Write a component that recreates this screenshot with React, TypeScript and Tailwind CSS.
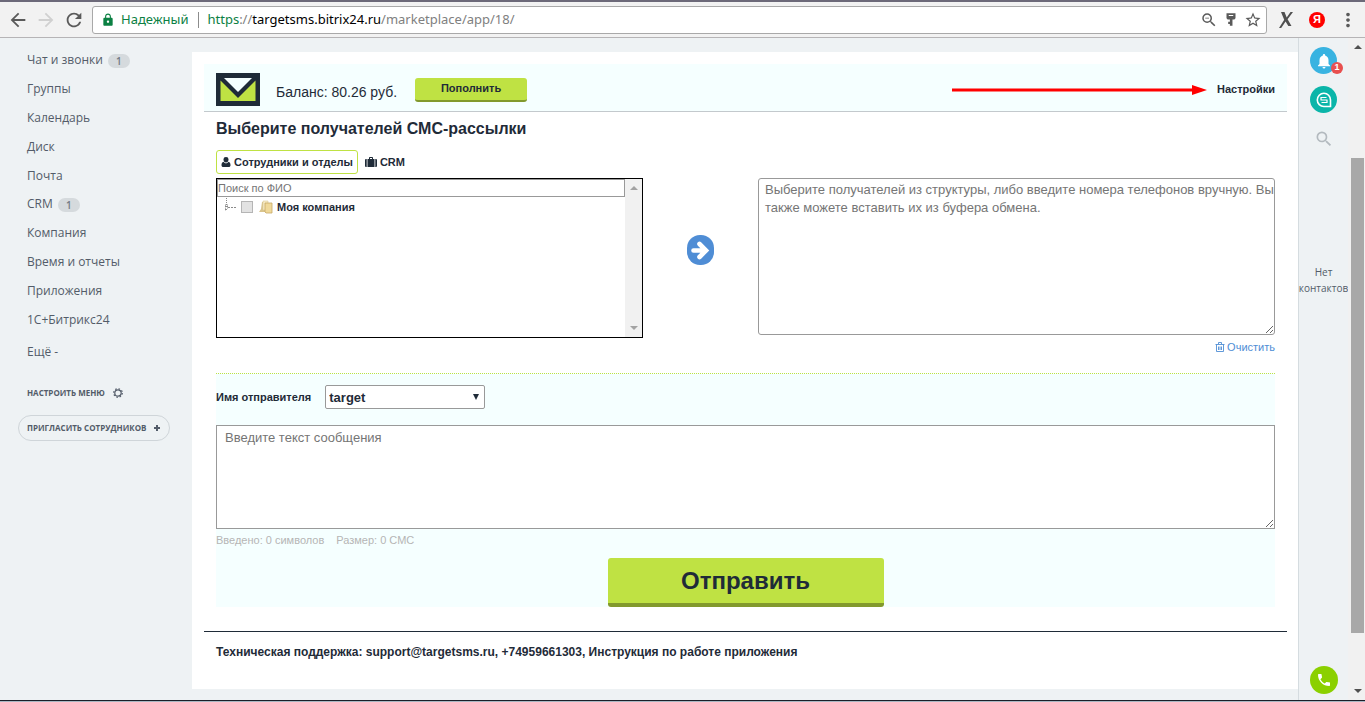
import React from "react";
import {
  MdArrowBack,
  MdArrowForward,
  MdLock,
  MdMoreVert,
  MdNotifications,
  MdPhone,
  MdRefresh,
  MdSearch,
  MdStarBorder,
  MdZoomOut,
} from "react-icons/md";

type MenuItem = { label: string; badge?: number };

const menu: MenuItem[] = [
  { label: "Чат и звонки", badge: 1 },
  { label: "Группы" },
  { label: "Календарь" },
  { label: "Диск" },
  { label: "Почта" },
  { label: "CRM", badge: 1 },
  { label: "Компания" },
  { label: "Время и отчеты" },
  { label: "Приложения" },
  { label: "1С+Битрикс24" },
];

function BrowserBar() {
  return (
    <header className="flex h-[38px] shrink-0 items-center border-t-2 border-b border-t-[#6c6979] border-b-[#b6b4b6] bg-[#f2f2f2] font-['Noto_Sans',sans-serif] text-[#5a5a5a]">
      <nav className="flex w-[92px] items-center gap-1.5 pl-[7px]" aria-label="Навигация">
        <button type="button" aria-label="Назад">
          <MdArrowBack className="size-[22px]" />
        </button>
        <button type="button" aria-label="Вперед" className="text-[#d0d0d0]">
          <MdArrowForward className="size-[22px]" />
        </button>
        <button type="button" aria-label="Обновить">
          <MdRefresh className="size-[22px]" />
        </button>
      </nav>
      <div className="flex h-7 grow items-center rounded-[3px] border border-[#a9a9a9] bg-white pr-1 pl-2 text-[13px]">
        <MdLock className="size-3.5 text-[#0b8043]" />
        <span className="ml-1.5 text-[#0b8043]">Надежный</span>
        <span className="mr-2 ml-2.5 h-4 w-px bg-[#8c8c8c]" />
        <span className="grow text-[#808080]">
          <span className="text-[#0b8043]">https</span>://<span className="text-black">targetsms.bitrix24.ru</span>
          /marketplace/app/18/
        </span>
        <div className="flex items-center gap-1">
          <button type="button" aria-label="Масштаб">
            <MdZoomOut className="size-[18px]" />
          </button>
          <button type="button" aria-label="Пароли">
            <svg viewBox="0 0 16 16" className="size-[18px]" fill="currentColor">
              <path fillRule="evenodd" d="M4 2h8v4.500l-1 1H9.300V13H7v-1.500H5.500v-2H7v-2H5l-1-1zM6 3.500v1h4v-1z" />
            </svg>
          </button>
          <button type="button" aria-label="В закладки">
            <MdStarBorder className="size-[18px]" />
          </button>
        </div>
      </div>
      <div className="flex items-center gap-3 pr-1.5 pl-3">
        <button type="button" aria-label="Расширение X">
          <svg viewBox="0 0 14 16" className="h-4 w-3.5" fill="#505050">
            <path d="M2 0h3.500l2.200 5.500L11.500 0H14L8.600 7.300 12.500 14h-3.200L6.600 9.500 2.200 16H0L5.200 7.700z" />
          </svg>
        </button>
        <button
          type="button"
          className="ml-1 flex size-4 items-center justify-center rounded-full bg-[#f00] font-['Liberation_Sans',sans-serif] text-[11px] font-bold text-white"
        >
          Я
        </button>
        <button type="button" aria-label="Меню">
          <MdMoreVert className="size-[22px]" />
        </button>
      </div>
    </header>
  );
}

function Sidebar() {
  return (
    <aside className="w-[192px] shrink-0 pt-2 font-['Open_Sans',sans-serif] text-[#535c69]">
      <ul className="grid h-[288px] auto-rows-fr pl-[27px] text-[12px]">
        {menu.map((item) => (
          <li key={item.label} className="flex items-center gap-[5px]">
            <a href="#">{item.label}</a>
            {item.badge !== undefined && (
              <span className="mt-0.5 flex h-3.5 w-[22px] items-center justify-center rounded-full bg-[#d5dadd] text-[10px] font-semibold text-[#737b85]">
                {item.badge}
              </span>
            )}
          </li>
        ))}
      </ul>
      <a href="#" className="mt-2 ml-[27px] block text-[12px] leading-5">
        Ещё -
      </a>
      <a href="#" className="mt-[23px] ml-[27px] flex items-center gap-2 text-[8px] leading-4 font-bold">
        НАСТРОИТЬ МЕНЮ
        <svg viewBox="0 0 10 10" className="size-2.5" fill="none" stroke="currentColor">
          <circle cx="5" cy="5" r="3.200" strokeWidth="1.200" />
          <circle cx="5" cy="5" r="4.300" strokeWidth="1.200" strokeDasharray="1.500 1.877" />
        </svg>
      </a>
      <button
        type="button"
        className="mt-3.5 ml-[18px] flex h-[26px] w-[152px] items-center justify-between rounded-full border border-[#cfd5d9] pr-2 pl-2 text-[8px] font-bold whitespace-nowrap"
      >
        ПРИГЛАСИТЬ СОТРУДНИКОВ
        <svg viewBox="0 0 8 8" className="size-2" stroke="currentColor" strokeWidth="2">
          <path d="M4 1v6M1 4h6" />
        </svg>
      </button>
    </aside>
  );
}

function AppHeader() {
  return (
    <header className="flex h-12 items-center border-b border-[#c3c9cd] bg-[#f5ffff] px-3 pt-1">
      <svg viewBox="0 0 44 33" className="h-[33px] w-11" role="img" aria-label="TargetSMS">
        <path d="M0 0h44v33H0z" fill="#1f2b38" />
        <path d="M8 5h28L22 19z" fill="#f5ffff" />
        <path d="M4.500 7.500 22 25 39.500 7.500V28h-35z" fill="#bfe243" />
      </svg>
      <span className="mt-1 ml-4 text-sm leading-5">Баланс: 80.26 руб.</span>
      <button
        type="button"
        className="ml-[18px] h-6 w-28 rounded-[3px] border-b-2 border-[#82992d] bg-[#bfe243] text-[11px] font-bold"
      >
        Пополнить
      </button>
      <svg viewBox="0 0 255 10" className="ml-auto h-2.5 w-[255px]" aria-hidden="true">
        <path d="M0 3.500h240V0l15 5-15 5V6.500H0z" fill="#f00" />
      </svg>
      <a href="#" className="ml-2.5 text-[11px] font-bold">
        Настройки
      </a>
    </header>
  );
}

function EmployeeTree() {
  return (
    <div className="flex h-40 border border-black bg-white">
      <div className="grow">
        <input
          type="text"
          aria-label="Поиск по ФИО"
          placeholder="Поиск по ФИО"
          className="block h-[18px] w-full border border-[#999] text-[11px] placeholder:text-[#757575]"
        />
        <label className="flex h-5 items-center pl-1.5 text-[11px] font-bold">
          <svg viewBox="0 0 14 16" className="h-4 w-3.5 self-start" fill="none" stroke="#8a8a8a">
            <path d="M3.500 1v10" strokeDasharray="1 1" />
            <path d="M2.500 7.500h2v4l-2 2zM5 10.500h9" strokeDasharray="2 1" />
          </svg>
          <input
            type="checkbox"
            className="ml-1 size-3 appearance-none border border-[#b5b5b5] bg-[#e2e2e2]"
          />
          <svg viewBox="0 0 14 14" className="ml-1.5 size-3.5">
            <path d="M3 2h4v10H0l2-3z" fill="#d9c48c" />
            <path d="M4 1h5v9H4z" fill="#f7ebc6" stroke="#dccb98" strokeWidth=".6" />
            <path d="M6 3h7v10H7l-1-1z" fill="#f0d99a" stroke="#c7a865" strokeWidth=".8" />
          </svg>
          <span className="ml-1">Моя компания</span>
        </label>
      </div>
      <div className="flex w-[17px] flex-col items-center justify-between bg-[#f1f1f1] py-[7px]">
        <svg viewBox="0 0 8 4" className="h-1 w-2" fill="#a3a3a3">
          <path d="M4 0l4 4H0z" />
        </svg>
        <svg viewBox="0 0 8 4" className="h-1 w-2" fill="#a3a3a3">
          <path d="M0 0h8L4 4z" />
        </svg>
      </div>
    </div>
  );
}

function Recipients() {
  return (
    <section className="px-3">
      <h1 className="mt-[7px] text-base leading-5 font-bold">Выберите получателей СМС-рассылки</h1>
      <div className="mt-[11px] flex gap-[7px] text-[11px] font-bold">
        <button
          type="button"
          className="flex h-6 items-center gap-[3px] rounded-[3px] border border-[#bfe243] px-1"
        >
          <svg viewBox="0 0 10 10" className="size-2.5" fill="currentColor">
            <path d="M5 0a2.500 2.500 0 0 1 2.500 2.700C7.500 4.200 6.400 5.500 5 5.500S2.500 4.200 2.500 2.700A2.500 2.500 0 0 1 5 0z" />
            <path d="M2.500 4.700C3 5.600 4 6.200 5 6.200s2-.6 2.500-1.500C9 5 9.500 6.500 9.500 8.200 9.500 9.300 8.700 10 7.800 10H2.200C1.300 10 .5 9.300.5 8.200.5 6.500 1 5 2.500 4.700z" />
          </svg>
          Сотрудники и отделы
        </button>
        <button type="button" className="flex h-6 items-center gap-[3px]">
          <svg viewBox="0 0 12 10" className="h-2.5 w-3" fill="currentColor">
            <path d="M0 3q0-1 1-1h.7v8H1q-1 0-1-1zM12 3q0-1-1-1h-.7v8h.7q1 0 1-1z" />
            <path fillRule="evenodd" d="M2.500 2H4V.8Q4 0 4.800 0h2.400Q8 0 8 .8V2h1.500v8h-7zM5 1v1h2V1z" />
          </svg>
          CRM
        </button>
      </div>
      <div className="mt-1 grid grid-cols-[427fr_115fr_517fr]">
        <EmployeeTree />
        <div className="flex items-start justify-center pt-[57px]">
          <button type="button" aria-label="Добавить получателей">
            <svg viewBox="0 0 27 30" className="h-[30px] w-[27px]">
              <rect width="27" height="30" rx="13" fill="#4f8dd5" />
              <path
                d="M6.500 15.500h12M12.500 9l6.500 6.500-6.500 6.500"
                fill="none"
                stroke="#fff"
                strokeWidth="4.600"
                strokeLinecap="round"
              />
            </svg>
          </button>
        </div>
        <div className="flex min-w-0 flex-col">
          <textarea
            aria-label="Получатели"
            placeholder="Выберите получателей из структуры, либо введите номера телефонов вручную. Вы также можете вставить их из буфера обмена."
            className="h-[157px] w-full rounded-[3px] border border-[#999] bg-white py-0.5 pr-0 pl-1.5 text-[13px] leading-[18px] placeholder:text-[#757575]"
          />
          <button type="button" className="mt-1 flex items-center gap-0.5 self-end text-[11px] leading-4 text-[#4f8dd5]">
            <svg viewBox="0 0 10 10" className="size-2.5" fill="none" stroke="currentColor">
              <path d="M.5 2.500h9M3.500 2V.5h3V2M1.500 2.500v7h7v-7M3.500 4.500v3.500M5 4.500v3.500M6.500 4.500v3.500" strokeWidth=".9" />
            </svg>
            Очистить
          </button>
        </div>
      </div>
    </section>
  );
}

function Message() {
  return (
    <section className="mx-3 mt-[18px] border-t border-dotted border-[#bfe243] bg-[#f5ffff]">
      <div className="flex items-center gap-3.5 pt-[11px]">
        <label htmlFor="sender" className="text-[11px] font-bold">
          Имя отправителя
        </label>
        <div className="relative">
          <select
            id="sender"
            className="block h-6 w-40 appearance-none rounded-[2px] border border-[#999] bg-white px-[3px] pt-px text-[13px] font-bold"
          >
            <option>target</option>
          </select>
          <svg viewBox="0 0 6 6" className="pointer-events-none absolute top-[9px] right-1.5 size-1.5" fill="#1f2b38">
            <path d="M0 0h6L3 6z" />
          </svg>
        </div>
      </div>
      <textarea
        aria-label="Текст сообщения"
        placeholder="Введите текст сообщения"
        className="mt-4 block h-[104px] w-full border border-[#999] bg-white px-2 py-[3px] text-[13px] leading-[18px] placeholder:text-[#757575]"
      />
      <p className="mt-[3px] flex gap-3 text-[11px] leading-4 text-[#b5b5b5]">
        <span>Введено: 0 символов</span>
        <span>Размер: 0 СМС</span>
      </p>
      <button
        type="button"
        className="mx-auto mt-2.5 block h-[49px] w-[276px] rounded-[3px] border-b-4 border-[#82992d] bg-[#bfe243] text-2xl leading-8 font-bold"
      >
        Отправить
      </button>
    </section>
  );
}

function ContactsRail() {
  return (
    <aside className="flex w-[50px] shrink-0 flex-col items-center border-l border-[#d5dce0] pt-[9px]">
      <button
        type="button"
        aria-label="Уведомления"
        className="relative flex size-[27px] items-center justify-center rounded-full bg-[#38b3e1] text-white"
      >
        <MdNotifications className="size-[18px]" />
        <span className="absolute -right-1.5 bottom-0 flex size-3 items-center justify-center rounded-full bg-[#e8504f] text-[9px] font-bold">
          1
        </span>
      </button>
      <button
        type="button"
        aria-label="Чат"
        className="mt-3 flex size-[27px] items-center justify-center rounded-full bg-[#0ab5a9]"
      >
        <svg viewBox="0 0 16 16" className="size-4" fill="none" stroke="#fff">
          <path d="M14.500 14.500V8A6.600 6.600 0 1 0 8 14.500z" strokeWidth="1.600" />
          <path d="M4.500 5.500h6M4.500 8h7M5.500 10.500h6M5 5v3M11 8v3" strokeWidth="1.200" />
        </svg>
      </button>
      <button type="button" aria-label="Поиск" className="mt-4 text-[#b3babf]">
        <MdSearch className="size-5" />
      </button>
      <p className="mt-[115px] text-center font-['Open_Sans',sans-serif] text-[10px] leading-4 text-[#535c69]">
        Нет
        <br />
        контактов
      </p>
      <button
        type="button"
        aria-label="Позвонить"
        className="mt-auto mb-1.5 flex size-7 items-center justify-center rounded-full bg-[#8bd000] text-white"
      >
        <MdPhone className="size-4" />
      </button>
    </aside>
  );
}

function PageScrollbar() {
  return (
    <div className="flex w-[17px] shrink-0 flex-col items-center bg-[#f1f1f1] py-[7px] pl-0.5" aria-hidden="true">
      <svg viewBox="0 0 8 4" className="h-1 w-2 shrink-0" fill="#505050">
        <path d="M4 0l4 4H0z" />
      </svg>
      <div className="mt-[109px] mb-[56px] w-[13px] grow bg-[#a8a8a8]" />
      <svg viewBox="0 0 8 4" className="h-1 w-2 shrink-0" fill="#505050">
        <path d="M0 0h8L4 4z" />
      </svg>
    </div>
  );
}

export default function App() {
  return (
    <div className="flex min-h-screen flex-col bg-[#eef2f4] font-['Liberation_Sans',Arial,sans-serif] text-[#1f2b38]">
      <BrowserBar />
      <div className="flex grow">
        <Sidebar />
        <main className="mt-3.5 mb-[11px] min-w-0 grow bg-white py-3 pr-[11px] pl-3">
          <AppHeader />
          <Recipients />
          <Message />
          <footer className="mt-6 border-t border-[#1f2b38] px-3 pt-3 text-[12px] leading-4 font-bold">
            Техническая поддержка: <a href="mailto:support@targetsms.ru">support@targetsms.ru</a>,{" "}
            <a href="tel:+74959661303">+74959661303</a>, <a href="#">Инструкция по работе приложения</a>
          </footer>
        </main>
        <ContactsRail />
        <PageScrollbar />
      </div>
      <div className="h-0.5 shrink-0 border-t border-[#1b1e28] bg-[#aab6c2]" />
    </div>
  );
}
